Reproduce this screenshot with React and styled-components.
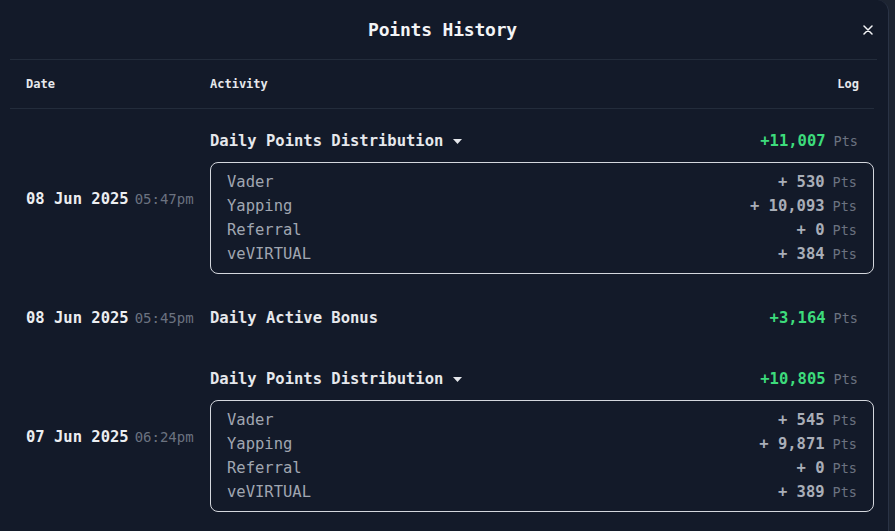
import React from "react";
import styled, { createGlobalStyle } from "styled-components";

const GlobalStyle = createGlobalStyle`
  html, body { margin: 0; padding: 0; background: #1d2431; }
  body { font-family: "DejaVu Sans Mono", "Liberation Mono", monospace; }
  * { box-sizing: border-box; }
`;

const Modal = styled.div`
  width: 889px;
  height: 531px;
  background: #131a29;
  border-top-right-radius: 12px;
  border-right: 1px solid #2a3345;
  overflow: hidden;
  color: #e6e8ec;
`;

const Header = styled.div`
  height: 59px;
  display: grid;
  grid-template-columns: 1fr auto 1fr;
  align-items: center;
  padding: 0 13px 0 10px;
`;

const Title = styled.h2`
  grid-column: 2;
  margin: 0;
  font-size: 18px;
  font-weight: 700;
  color: #f3f4f6;
  letter-spacing: -0.2px;
`;

const Close = styled.button`
  justify-self: end;
  background: none;
  border: none;
  padding: 0;
  width: 14px;
  height: 14px;
  display: flex;
  align-items: center;
  justify-content: center;
  color: #f3f4f6;
  cursor: pointer;
`;

const Divider = styled.div`
  margin: 0 11px 0 10px;
  border-top: 1px solid #232c3b;
`;

const Table = styled.div`
  margin: 0 14px 0 10px;
`;

const HeadRow = styled.div`
  display: grid;
  grid-template-columns: 184px 1fr auto;
  align-items: center;
  height: 49px;
  padding: 0 15px 0 16px;
  border-bottom: 1px solid #232c3b;
  font-size: 12px;
  font-weight: 700;
  color: #e6e8ec;
`;

const Row = styled.div`
  display: grid;
  grid-template-columns: 184px 1fr;
  align-items: center;
  padding: 15px 0 12px 16px;
`;

const DateCell = styled.div`
  display: flex;
  align-items: baseline;
  gap: 6px;
  white-space: nowrap;
`;

const DateText = styled.span`
  font-size: 15.5px;
  font-weight: 700;
  color: #eceef1;
`;

const TimeText = styled.span`
  font-size: 14px;
  color: #6b7280;
`;

const ActivityCell = styled.div`
  display: flex;
  flex-direction: column;
`;

const TitleLine = styled.div`
  height: 34px;
  display: flex;
  align-items: center;
  justify-content: space-between;
  padding-right: 16px;
`;

const ActivityName = styled.span`
  display: flex;
  align-items: center;
  gap: 10px;
  font-size: 15.5px;
  font-weight: 700;
  color: #e6e8ec;
`;

const Amount = styled.span`
  display: flex;
  align-items: baseline;
  gap: 8px;
  font-size: 15.5px;
  font-weight: 700;
  color: ${(p) => (p.$green ? "#3ddc7c" : "#a9aeb8")};
`;

const Unit = styled.span`
  font-size: 13.5px;
  font-weight: 400;
  color: #6b7280;
`;

const Breakdown = styled.div`
  margin-top: 4px;
  border: 1px solid #d4d7dd;
  border-radius: 8px;
  padding: 7px 16px;
`;

const Item = styled.div`
  height: 24px;
  display: flex;
  align-items: center;
  justify-content: space-between;
  font-size: 15.5px;
  color: #a0a6b1;
`;

const Chevron = () => (
  <svg width="9" height="5" viewBox="0 0 9 5">
    <path d="M0 0 H9 L4.5 5 Z" fill="#e6e8ec" />
  </svg>
);

const data = [
  {
    date: "08 Jun 2025",
    time: "05:47pm",
    name: "Daily Points Distribution",
    total: "+11,007",
    items: [
      ["Vader", "+ 530"],
      ["Yapping", "+ 10,093"],
      ["Referral", "+ 0"],
      ["veVIRTUAL", "+ 384"],
    ],
  },
  {
    date: "08 Jun 2025",
    time: "05:45pm",
    name: "Daily Active Bonus",
    total: "+3,164",
  },
  {
    date: "07 Jun 2025",
    time: "06:24pm",
    name: "Daily Points Distribution",
    total: "+10,805",
    items: [
      ["Vader", "+ 545"],
      ["Yapping", "+ 9,871"],
      ["Referral", "+ 0"],
      ["veVIRTUAL", "+ 389"],
    ],
  },
];

export default function App() {
  return (
    <>
      <GlobalStyle />
      <Modal>
        <Header>
          <Title>Points History</Title>
          <Close aria-label="Close">
            <svg width="10" height="10" viewBox="0 0 10 10">
              <path d="M1 1 L9 9 M9 1 L1 9" stroke="#f3f4f6" strokeWidth="1.5" strokeLinecap="round" />
            </svg>
          </Close>
        </Header>
        <Divider />
        <Table>
          <HeadRow>
            <span>Date</span>
            <span>Activity</span>
            <span>Log</span>
          </HeadRow>
          {data.map((r, i) => (
            <Row key={i}>
              <DateCell>
                <DateText>{r.date}</DateText>
                <TimeText>{r.time}</TimeText>
              </DateCell>
              <ActivityCell>
                <TitleLine>
                  <ActivityName>
                    {r.name}
                    {r.items && <Chevron />}
                  </ActivityName>
                  <Amount $green>
                    {r.total}
                    <Unit>Pts</Unit>
                  </Amount>
                </TitleLine>
                {r.items && (
                  <Breakdown>
                    {r.items.map(([label, val]) => (
                      <Item key={label}>
                        <span>{label}</span>
                        <Amount>
                          {val}
                          <Unit>Pts</Unit>
                        </Amount>
                      </Item>
                    ))}
                  </Breakdown>
                )}
              </ActivityCell>
            </Row>
          ))}
        </Table>
      </Modal>
    </>
  );
}
